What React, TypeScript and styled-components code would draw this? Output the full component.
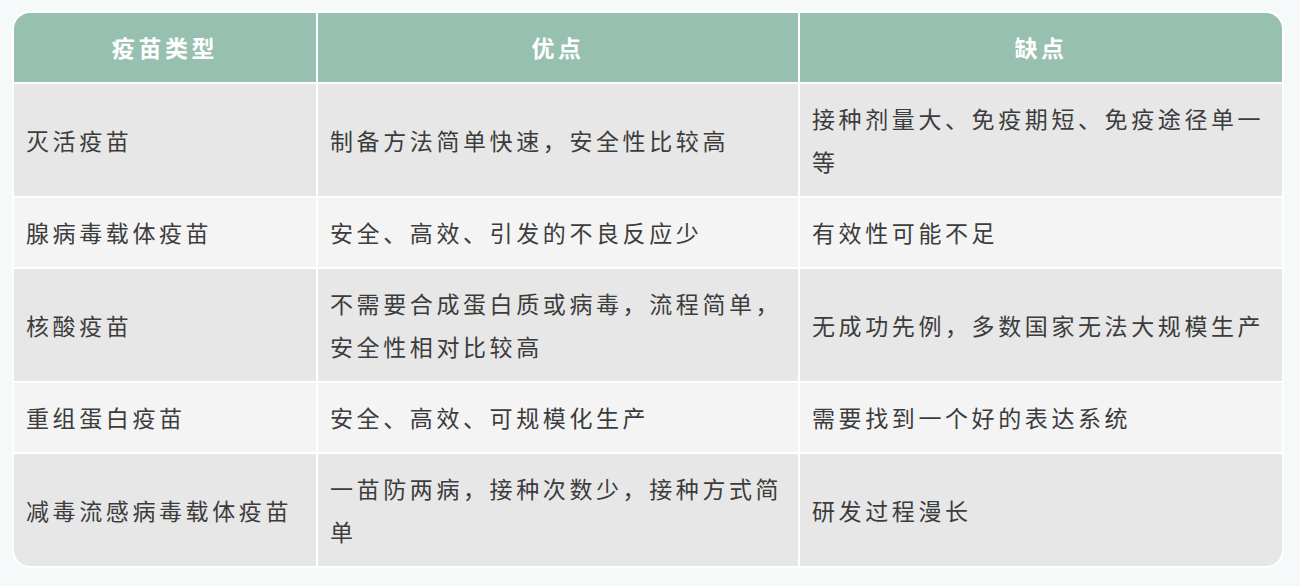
import React from "react";
import styled, { createGlobalStyle } from "styled-components";

const GlobalStyle = createGlobalStyle`
  html, body {
    margin: 0;
    padding: 0;
    background: #f6f9f9;
  }
  body {
    font-family: "Noto Sans CJK SC", "Noto Sans", sans-serif;
  }
`;

const rows = [
  {
    type: "灭活疫苗",
    pros: "制备方法简单快速，安全性比较高",
    cons: "接种剂量大、免疫期短、免疫途径单一等",
  },
  {
    type: "腺病毒载体疫苗",
    pros: "安全、高效、引发的不良反应少",
    cons: "有效性可能不足",
  },
  {
    type: "核酸疫苗",
    pros: "不需要合成蛋白质或病毒，流程简单，安全性相对比较高",
    cons: "无成功先例，多数国家无法大规模生产",
  },
  {
    type: "重组蛋白疫苗",
    pros: "安全、高效、可规模化生产",
    cons: "需要找到一个好的表达系统",
  },
  {
    type: "减毒流感病毒载体疫苗",
    pros: "一苗防两病，接种次数少，接种方式简单",
    cons: "研发过程漫长",
  },
];

const Page = styled.div`
  width: 1300px;
  height: 586px;
  padding: 11px 0 0 12px;
  box-sizing: border-box;
`;

const Frame = styled.div`
  width: 1272px;
  padding: 2px;
  box-sizing: border-box;
  background: #ffffff;
  border-radius: 18px;
`;

const Table = styled.div`
  display: grid;
  grid-template-columns: 302px 480px 1fr;
  gap: 2px;
  background: #ffffff;
  border-radius: 16px;
  overflow: hidden;
`;

const HeadCell = styled.div`
  background: #98c0b0;
  color: #ffffff;
  font-size: 23px;
  font-weight: 700;
  letter-spacing: 3.6px;
  line-height: 43px;
  padding: 13px 12px;
  text-align: center;
`;

const Cell = styled.div<{ $odd: boolean }>`
  background: ${(p) => (p.$odd ? "#e7e7e7" : "#f4f4f4")};
  color: #3c3c3c;
  font-size: 23px;
  letter-spacing: 3.6px;
  line-height: 43px;
  padding: 13px 12px;
  display: flex;
  align-items: center;
`;

export default function App() {
  return (
    <>
      <GlobalStyle />
      <Page>
        <Frame>
          <Table>
            <HeadCell>疫苗类型</HeadCell>
            <HeadCell>优点</HeadCell>
            <HeadCell>缺点</HeadCell>
            {rows.map((row, idx) => (
              <React.Fragment key={row.type}>
                <Cell $odd={idx % 2 === 0}>{row.type}</Cell>
                <Cell $odd={idx % 2 === 0}>{row.pros}</Cell>
                <Cell $odd={idx % 2 === 0}>{row.cons}</Cell>
              </React.Fragment>
            ))}
          </Table>
        </Frame>
      </Page>
    </>
  );
}
